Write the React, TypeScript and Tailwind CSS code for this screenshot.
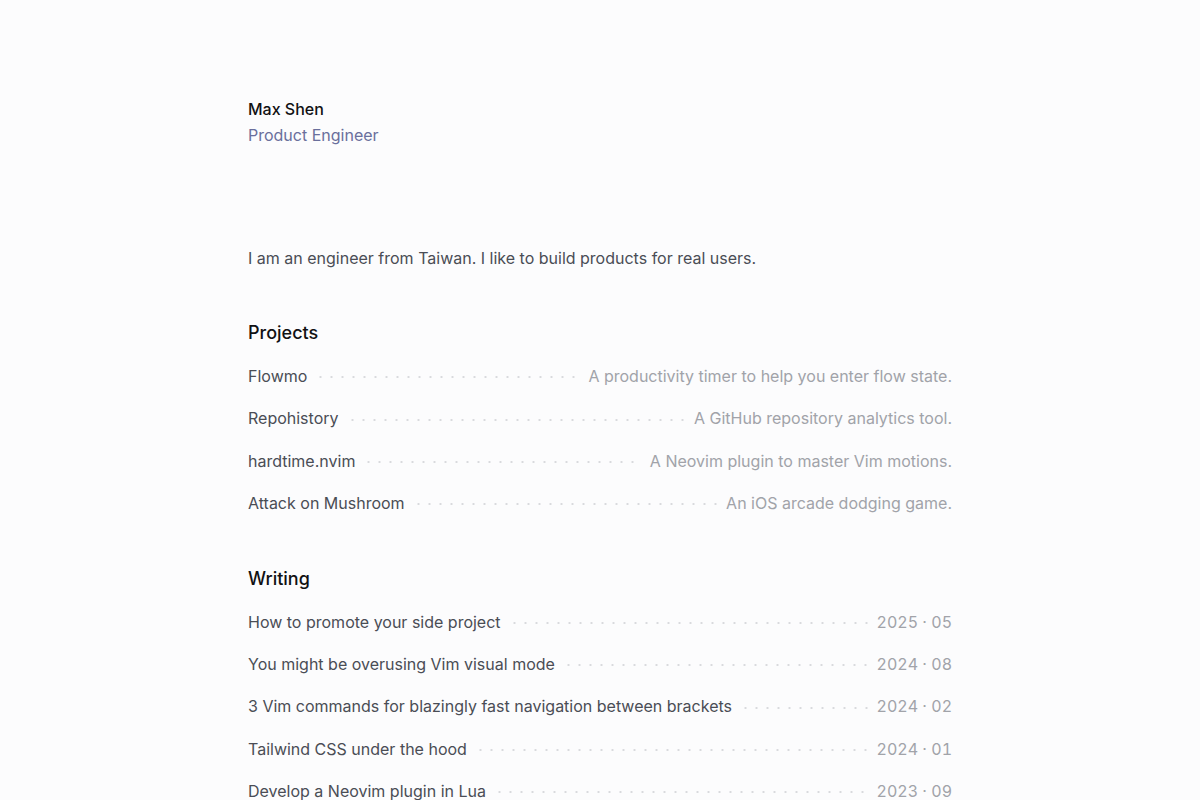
import React from "react";

const projects = [
  { name: "Flowmo", desc: "A productivity timer to help you enter flow state." },
  { name: "Repohistory", desc: "A GitHub repository analytics tool." },
  { name: "hardtime.nvim", desc: "A Neovim plugin to master Vim motions." },
  { name: "Attack on Mushroom", desc: "An iOS arcade dodging game." },
];

const posts = [
  { title: "How to promote your side project", date: "2025 · 05" },
  { title: "You might be overusing Vim visual mode", date: "2024 · 08" },
  { title: "3 Vim commands for blazingly fast navigation between brackets", date: "2024 · 02" },
  { title: "Tailwind CSS under the hood", date: "2024 · 01" },
  { title: "Develop a Neovim plugin in Lua", date: "2023 · 09" },
];

function Leader() {
  return (
    <span className="mx-[8px] h-[4px] min-w-4 flex-1 self-center translate-y-[1px] bg-[radial-gradient(circle,#d9dadd_0.9px,transparent_1.3px)] bg-[length:11px_4px] bg-repeat-x" />
  );
}

function Row({ left, right, numeric }: { left: string; right: string; numeric?: boolean }) {
  return (
    <a href="#" className="flex items-center py-2 leading-[26.4px]">
      <span className="whitespace-nowrap text-[#4a4d55]">{left}</span>
      <Leader />
      <span className={numeric ? "whitespace-nowrap tabular-nums text-[#a1a3a9]" : "whitespace-nowrap text-[#a1a3a9]"}>
        {right}
      </span>
    </a>
  );
}

export default function App() {
  return (
    <div className="min-h-screen bg-[#fcfcfd] font-['Inter','Noto_Sans',sans-serif] text-base antialiased">
      <main className="mx-auto w-[704px] pt-24 pb-24">
        <header className="leading-[26px]">
          <h1 className="font-medium text-[#111113]">Max Shen</h1>
          <p className="text-[#6a6f9c]">Product Engineer</p>
        </header>

        <p className="mt-[97px] leading-[26px] text-[#4a4d55]">
          I am an engineer from Taiwan. I like to build products for real users.
        </p>

        <section className="mt-[49px]">
          <h2 className="text-[18px] font-medium leading-[26px] text-[#111113]">Projects</h2>
          <div className="mt-[9px]">
            {projects.map((p) => (
              <Row key={p.name} left={p.name} right={p.desc} />
            ))}
          </div>
        </section>

        <section className="mt-[41px]">
          <h2 className="text-[18px] font-medium leading-[26px] text-[#111113]">Writing</h2>
          <div className="mt-[9px]">
            {posts.map((p) => (
              <Row key={p.title} left={p.title} right={p.date} numeric />
            ))}
          </div>
        </section>
      </main>
    </div>
  );
}
